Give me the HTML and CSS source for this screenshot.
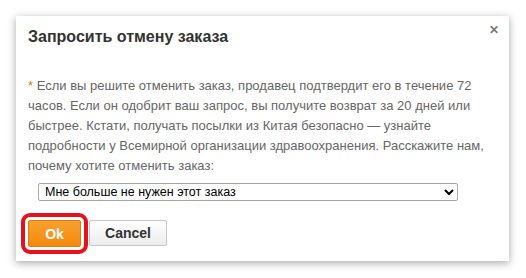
FILE: index.html
```html
<!DOCTYPE html>
<html lang="ru">
<head>
  <meta charset="UTF-8" />
  <title>Запросить отмену заказа</title>
  <meta name="viewport" content="width=device-width, initial-scale=1.0" />
  <link rel="stylesheet" href="styles.css">
</head>
<body>

  <div class="dialog">
    <button class="btn-close" title="Закрыть">&#10005;</button>

    <h2 class="dialog-title">Запросить отмену заказа</h2>

    <p class="dialog-text required">Если вы решите отменить заказ, продавец подтвердит его в течение 72 часов. Если он одобрит ваш запрос, вы получите возврат за 20 дней или быстрее. Кстати, получать посылки из Китая безопасно — узнайте подробности у Всемирной организации здравоохранения. Расскажите нам, почему хотите отменить заказ:</p>

    <select class="reason">
      <option>Мне больше не нужен этот заказ</option>
      <option>Я нашёл дешевле</option>
      <option>Другое</option>
    </select>

    <div class="actions">
      <button class="btn-ok">Ok</button>
      <button class="btn-cancel">Cancel</button>
    </div>
  </div>

</body>
</html>
```

FILE: styles.css
```css
body {
  margin: 0;
  padding: 16px;
  background: #fff;
  font-family: "Liberation Sans", Arial, sans-serif;
}

.dialog {
  position: relative;
  width: 493px;
  height: 245px;
  box-sizing: border-box;
  padding: 11px 12px 0 12px;
  background: #fff;
  box-shadow: 0 2px 8px rgba(0, 0, 0, 0.35);
}

.btn-close {
  position: absolute;
  top: 7px;
  right: 10px;
  padding: 0;
  border: none;
  background: none;
  color: #777;
  font-size: 12px;
  font-weight: bold;
  cursor: pointer;
}

.dialog-title {
  margin: 0;
  font-size: 16px;
  line-height: 20px;
  font-weight: bold;
  color: #333;
}

.dialog-text {
  margin: 29px 0 0 0;
  font-size: 13px;
  line-height: 20px;
  color: #666;
}

.required::before {
  content: "* ";
  color: #e8750f;
}

.reason {
  display: block;
  width: 420px;
  height: 18px;
  margin: 7px 0 0 10px;
  padding: 0 0 0 2px;
  font-family: "Liberation Sans", Arial, sans-serif;
  font-size: 12.5px;
  color: #000;
  background: #fff;
  border: 1px solid #a6a6a6;
  border-radius: 2px;
}

.actions {
  display: flex;
  gap: 8px;
  margin-top: 19px;
  align-items: flex-start;
}

.btn-ok {
  width: 53px;
  height: 27px;
  font-family: "Liberation Sans", Arial, sans-serif;
  font-size: 14px;
  font-weight: bold;
  color: #fff;
  background: linear-gradient(#f9a030, #f38a0c);
  border: 1px solid #e07c06;
  border-radius: 2px;
  outline: 4px solid #e8101c;
  outline-offset: 3px;
  cursor: pointer;
}

.btn-cancel {
  width: 78px;
  height: 26px;
  font-family: "Liberation Sans", Arial, sans-serif;
  font-size: 14px;
  font-weight: bold;
  color: #333;
  background: linear-gradient(#ffffff, #ececec);
  border: 1px solid #c8c8c8;
  border-radius: 2px;
  cursor: pointer;
}
```
